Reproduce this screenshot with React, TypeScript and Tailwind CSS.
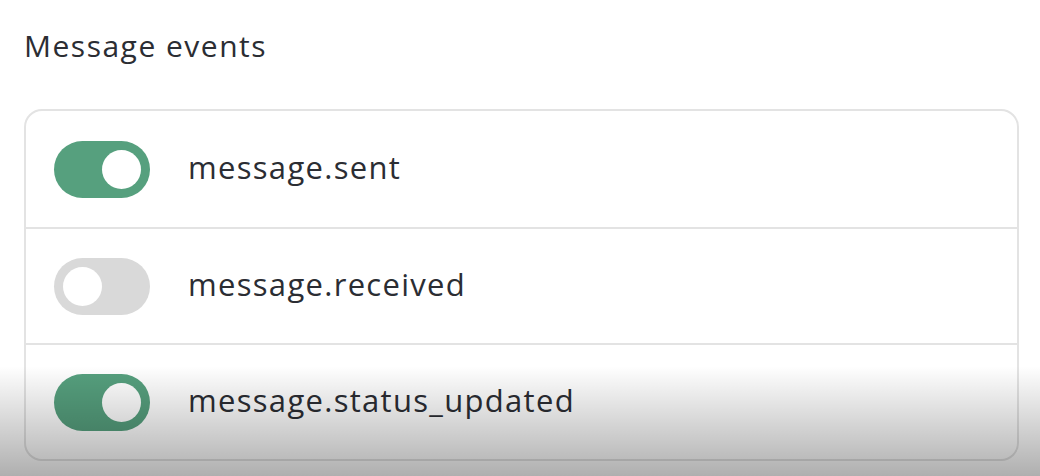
import { useState } from "react";

const events = [
  { name: "message.sent", on: true },
  { name: "message.received", on: false },
  { name: "message.status_updated", on: true },
];

function Toggle({ on, onClick }: { on: boolean; onClick: () => void }) {
  return (
    <button
      onClick={onClick}
      className={`flex h-[57px] w-[96px] shrink-0 items-center rounded-full px-[9px] ${
        on ? "justify-end bg-[#56a07e]" : "justify-start bg-[#d9d9d9]"
      }`}
    >
      <span className="h-[39px] w-[39px] rounded-full bg-white" />
    </button>
  );
}

export default function App() {
  const [state, setState] = useState(events.map((e) => e.on));

  return (
    <div className="relative h-[476px] w-[1040px] overflow-hidden bg-white font-['Open_Sans',sans-serif] text-[#2b2d33]">
      <div className="flex flex-col px-[24px] pt-[24px]">
        <h2 className="h-[44px] text-[30px] leading-[44px] tracking-[1.5px]">Message events</h2>
        <div className="mt-[41px] flex w-[995px] flex-col rounded-[18px] border-2 border-[#e3e3e3]">
          {events.map((ev, i) => (
            <div
              key={ev.name}
              className={`flex h-[116px] items-center gap-[38px] pl-[28px] ${
                i > 0 ? "border-t-2 border-[#e3e3e3]" : ""
              }`}
            >
              <Toggle
                on={state[i]}
                onClick={() => setState((s) => s.map((v, j) => (j === i ? !v : v)))}
              />
              <span className="-mt-[4px] text-[31px] font-medium tracking-[1.3px]">{ev.name}</span>
            </div>
          ))}
        </div>
      </div>
      {/* bottom fade from the recording */}
      <div className="pointer-events-none absolute inset-x-0 bottom-0 h-[110px] bg-gradient-to-b from-transparent to-[#00000050]" />
    </div>
  );
}
